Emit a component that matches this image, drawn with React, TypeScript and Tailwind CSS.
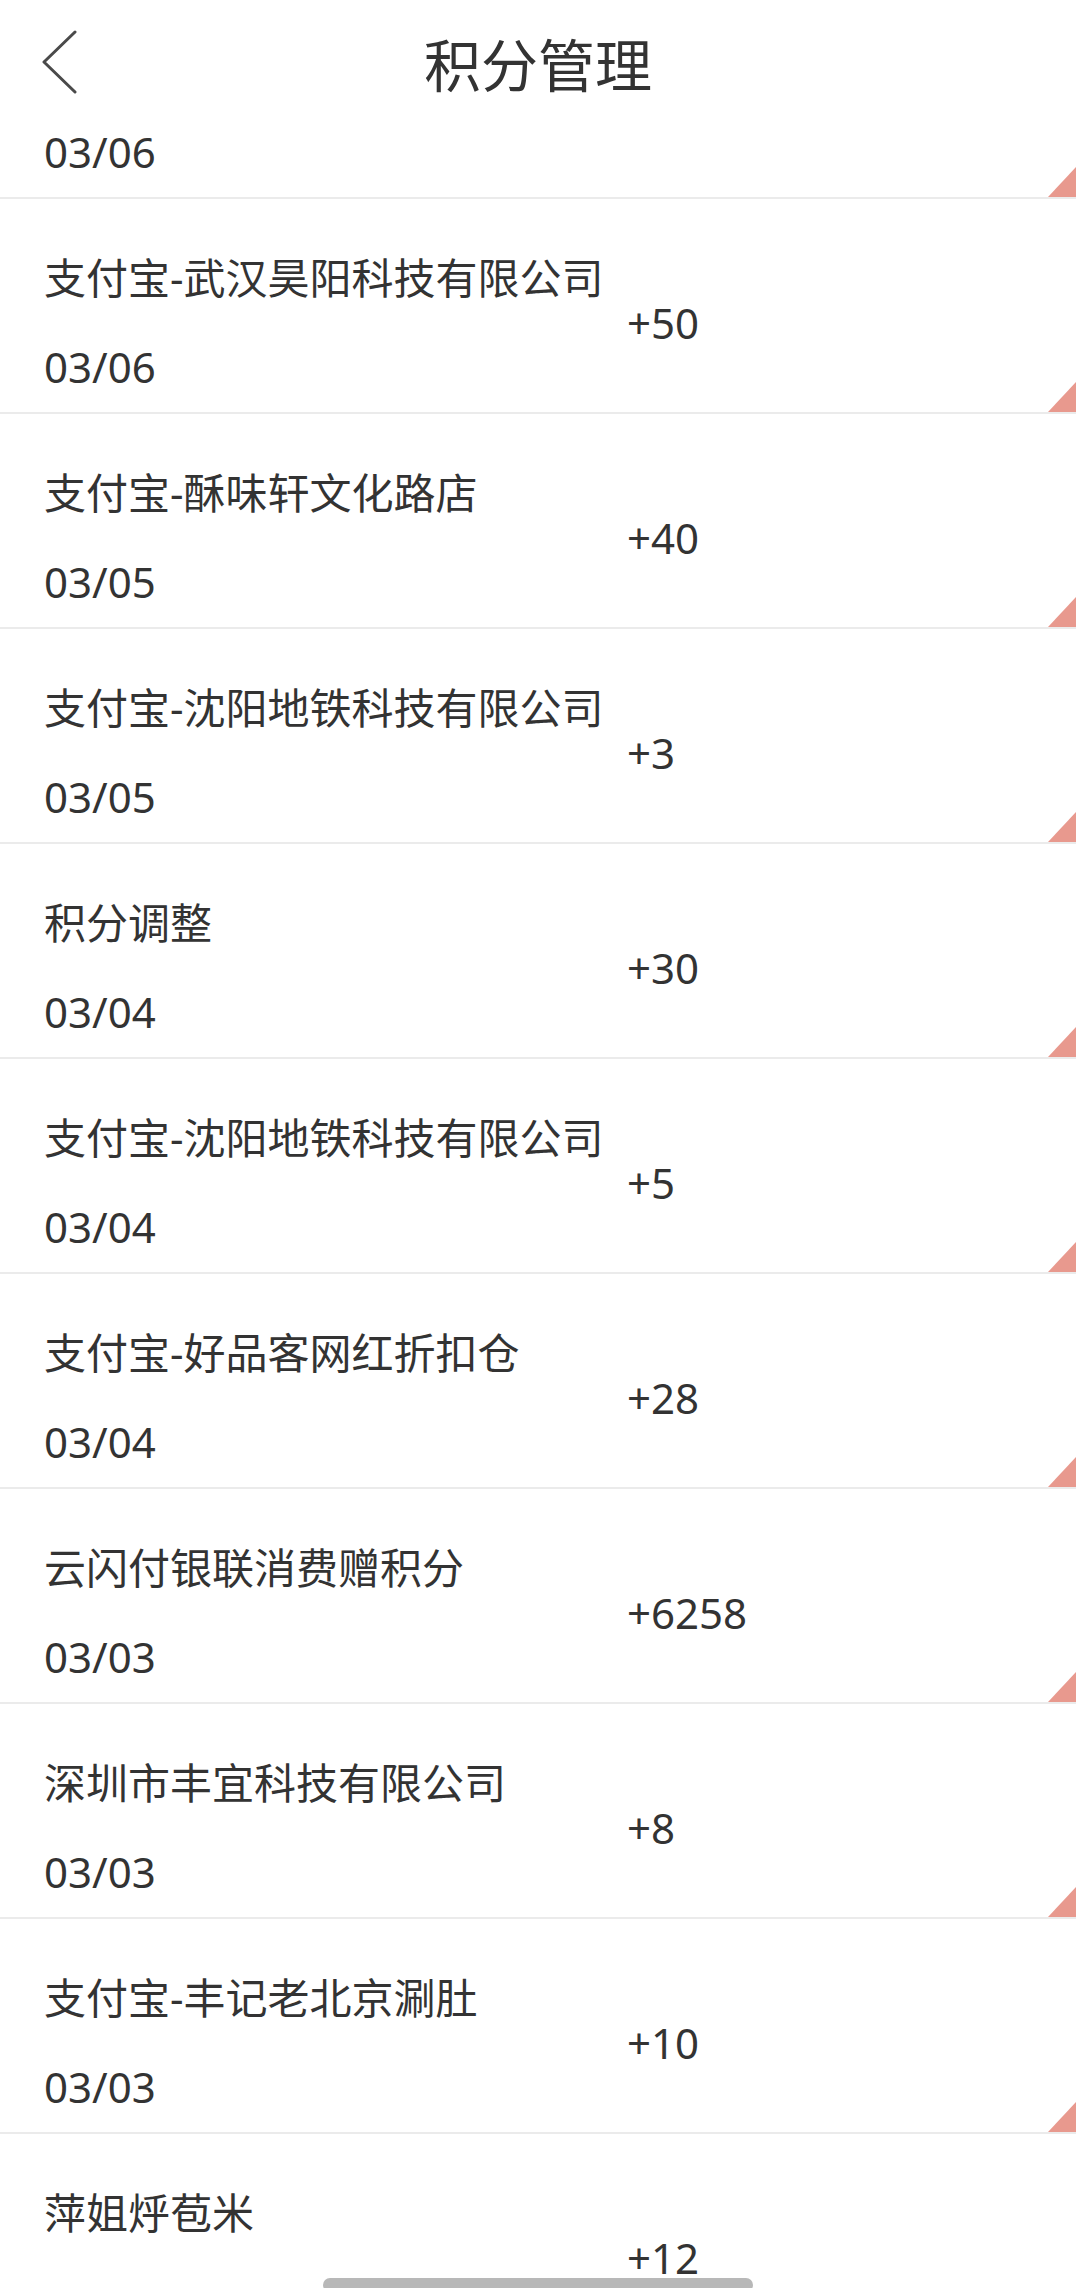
import React from 'react';

const rows = [
  { title: '支付宝-武汉昊阳科技有限公司', amount: '+50', date: '03/06' },
  { title: '支付宝-酥味轩文化路店', amount: '+40', date: '03/05' },
  { title: '支付宝-沈阳地铁科技有限公司', amount: '+3', date: '03/05' },
  { title: '积分调整', amount: '+30', date: '03/04' },
  { title: '支付宝-沈阳地铁科技有限公司', amount: '+5', date: '03/04' },
  { title: '支付宝-好品客网红折扣仓', amount: '+28', date: '03/04' },
  { title: '云闪付银联消费赠积分', amount: '+6258', date: '03/03' },
  { title: '深圳市丰宜科技有限公司', amount: '+8', date: '03/03' },
  { title: '支付宝-丰记老北京涮肚', amount: '+10', date: '03/03' },
  { title: '萍姐烀苞米', amount: '+12', date: '03/03' },
];

function Corner() {
  return (
    <svg
      className="absolute bottom-0 right-0"
      width="28"
      height="30"
      viewBox="0 0 28 30"
    >
      <polygon points="0,30 28,30 28,0" fill="#e8998e" />
    </svg>
  );
}

export default function App() {
  return (
    <div className="relative h-[2288px] w-[1076px] overflow-hidden bg-white font-['Noto_Sans','Noto_Sans_CJK_SC',sans-serif] text-[#333333]">
      <header className="grid h-[130px] grid-cols-[1fr_auto_1fr] items-center">
        <div className="mb-[6px] pl-[42px]">
          <svg width="36" height="64" viewBox="0 0 36 64" fill="none">
            <polyline
              points="33,2 2,32 33,62"
              stroke="#4a4a4a"
              strokeWidth="3"
              strokeLinecap="round"
              strokeLinejoin="round"
            />
          </svg>
        </div>
        <h1 className="text-[57px] font-normal leading-none">积分管理</h1>
        <div />
      </header>

      <div className="relative h-[69px] border-b-2 border-[#ebebeb] pl-[44px]">
        <div className="text-[42px] leading-[44px]">03/06</div>
        <Corner />
      </div>

      {rows.map((r, i) => (
        <div
          key={i}
          className="relative flex h-[215px] items-center border-b-2 border-[#ebebeb] pl-[44px] pt-[34px]"
        >
          <div className="flex w-[583px] flex-col gap-[41px]">
            <div className="whitespace-nowrap text-[42px] leading-[48px]">{r.title}</div>
            <div className="text-[42px] leading-[48px]">{r.date}</div>
          </div>
          <div className="text-[42px] leading-[48px]">{r.amount}</div>
          <Corner />
        </div>
      ))}

      <div className="absolute left-[323px] top-[2278px] h-[14px] w-[430px] rounded-full bg-[#b8b8b8]" />
    </div>
  );
}
